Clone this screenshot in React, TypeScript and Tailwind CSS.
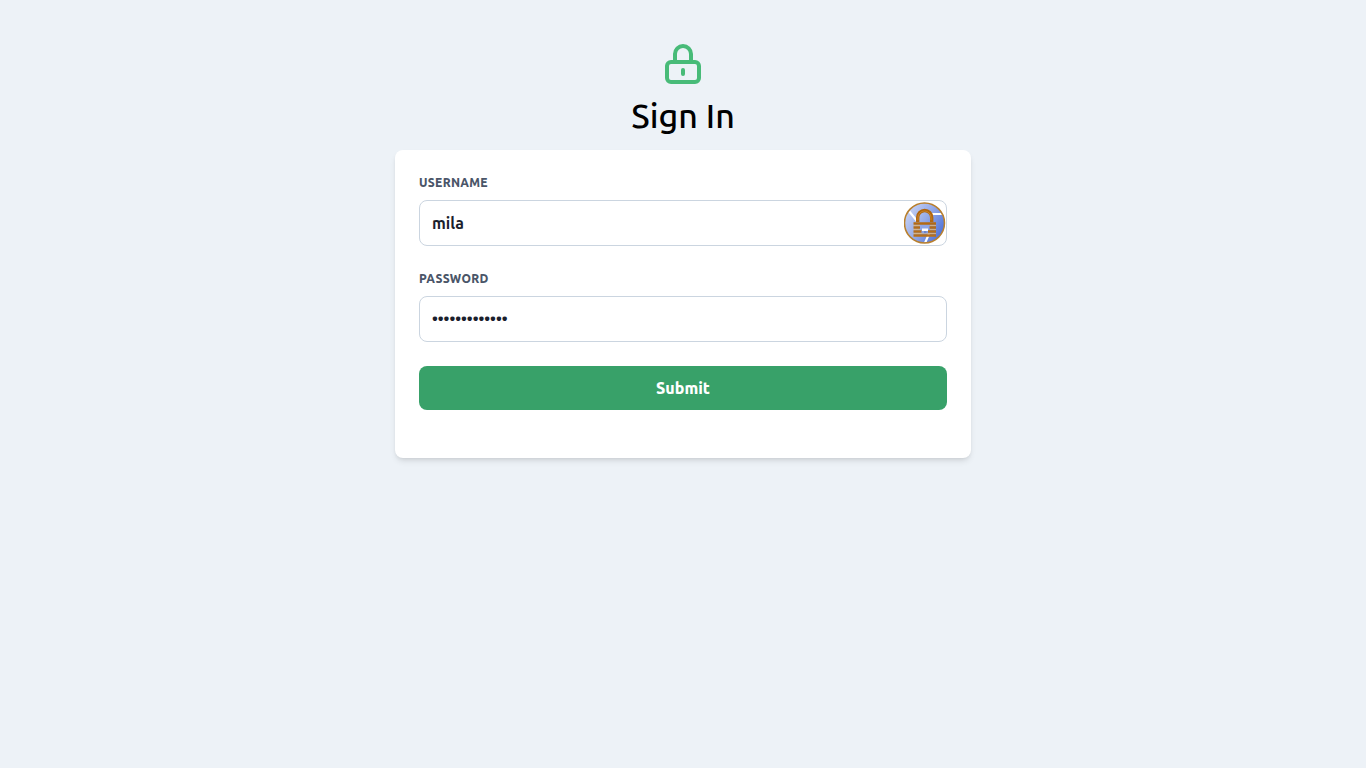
import React, { useState } from "react";

function LockIcon() {
  return (
    <svg
      className="h-12 w-12 text-[#48bb78]"
      viewBox="0 0 24 24"
      fill="none"
      stroke="currentColor"
      strokeWidth="2"
      strokeLinecap="round"
      strokeLinejoin="round"
      aria-hidden="true"
    >
      <path d="M12 15v2m-6 4h12a2 2 0 002-2v-6a2 2 0 00-2-2H6a2 2 0 00-2 2v6a2 2 0 002 2zm10-10V7a4 4 0 00-8 0v4h8z" />
    </svg>
  );
}

function KeyVaultIcon() {
  return (
    <svg className="h-[42px] w-[42px]" viewBox="0 0 42 42" fill="none" aria-hidden="true">
      <defs>
        <linearGradient id="disc" x1="4" y1="8" x2="38" y2="30" gradientUnits="userSpaceOnUse">
          <stop offset="0" stopColor="#c6d1f3" />
          <stop offset="0.5" stopColor="#93a9e8" />
          <stop offset="1" stopColor="#5275d8" />
        </linearGradient>
        <linearGradient id="brass" x1="0" y1="8" x2="0" y2="34" gradientUnits="userSpaceOnUse">
          <stop offset="0" stopColor="#b0640c" />
          <stop offset="1" stopColor="#b8701a" />
        </linearGradient>
        <clipPath id="discClip">
          <circle cx="21" cy="21" r="19.5" />
        </clipPath>
      </defs>
      <circle cx="20.500" cy="21" r="20" fill="url(#disc)" />
      <g clipPath="url(#discClip)" stroke="#fff" strokeWidth="2.2">
        <path d="M2 9l3 0 8 10M28 12h13M25 32l-4 9" />
      </g>
      <circle cx="20.500" cy="21" r="20" stroke="#b9802e" strokeWidth="1.5" />
      <path d="M13.700 20v-4.500a7 7 0 0114 0V20" stroke="url(#brass)" strokeWidth="3.400" />
      <path d="M14 18v-2.500a6.500 6.500 0 0113 0V18" stroke="#d09038" strokeWidth="0.7" />
      <path
        d="M9.500 21.500h22.500M9.500 25.500h6.500M25 25.500H32M9.500 29.500h8M24 29.500H32M9.500 33.500h22.500"
        stroke="url(#brass)"
        strokeWidth="2.600"
      />
      <path d="M9.500 23.500h6M26 23.500h6M9.500 27.500h6M26 27.500h6M9.500 31.500h22.500" stroke="#d8b380" strokeWidth="0.9" />
      <path d="M16.500 23h9v4l-2 1.500v3h-5v-3l-2-1.500z" fill="#8fa6e6" />
      <path d="M18 26.500h6v2.500h-6z" fill="#fff" />
      <path d="M20 29h2.500v2H20z" fill="#6f86c8" />
    </svg>
  );
}

const labelClass = "mb-2 block text-[12px] leading-[18px] font-extrabold tracking-wide text-[#4a5568] uppercase";
const inputClass =
  "block w-full rounded-lg border border-[#cbd5e0] bg-white p-3 text-[16px] leading-5 font-semibold text-[#1a202c] outline-none focus:border-[#48bb78]";

export default function App() {
  const [username, setUsername] = useState("mila");
  const [password, setPassword] = useState("correct-horse");

  return (
    <main className="min-h-screen bg-[#edf2f7] px-4 py-10 font-[Ubuntu,'Noto_Sans',sans-serif]">
      <div className="mx-auto flex max-w-xl flex-col items-center">
        <LockIcon />
        <h1 className="mb-2 text-[34px] leading-[54px] font-medium text-black">Sign In</h1>
        <form
          className="w-full rounded-lg bg-white px-6 pt-6 pb-12 shadow-md"
          onSubmit={(event) => event.preventDefault()}
        >
          <div className="mb-6">
            <label className={labelClass} htmlFor="username">
              Username
            </label>
            <div className="relative">
              <input
                id="username"
                type="text"
                className={inputClass}
                value={username}
                onChange={(event) => setUsername(event.target.value)}
              />
              <button
                type="button"
                aria-label="Fill in saved login"
                className="absolute top-0.5 right-px rounded-full"
              >
                <KeyVaultIcon />
              </button>
            </div>
          </div>
          <div className="mb-6">
            <label className={labelClass} htmlFor="password">
              Password
            </label>
            <input
              id="password"
              type="password"
              className={inputClass}
              value={password}
              onChange={(event) => setPassword(event.target.value)}
            />
          </div>
          <button
            type="submit"
            className="block w-full rounded-lg bg-[#38a169] px-4 py-2.5 text-[16px] leading-6 font-extrabold text-white hover:bg-[#2f855a]"
          >
            Submit
          </button>
        </form>
      </div>
    </main>
  );
}
